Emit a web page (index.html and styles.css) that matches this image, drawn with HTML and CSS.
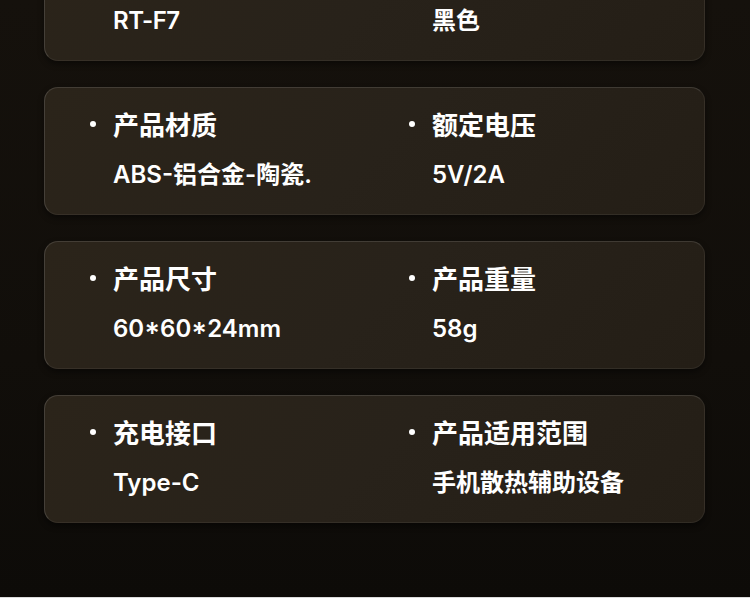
FILE: index.html
```html
<!DOCTYPE html>
<html lang="zh-CN">
<head>
<meta charset="utf-8">
<title>产品参数</title>
<link rel="stylesheet" href="styles.css">
</head>
<body>
<div class="page">
  <div class="specs">
    <div class="card card-partial">
      <div class="item"><div class="value value-narrow">RT-F7</div></div>
      <div class="item"><div class="value">黑色</div></div>
    </div>
    <div class="card">
      <div class="item"><div class="title"><span class="dot"></span>产品材质</div><div class="value">ABS-铝合金-陶瓷.</div></div>
      <div class="item"><div class="title"><span class="dot"></span>额定电压</div><div class="value">5V/2A</div></div>
    </div>
    <div class="card">
      <div class="item"><div class="title"><span class="dot"></span>产品尺寸</div><div class="value">60*60*24mm</div></div>
      <div class="item"><div class="title"><span class="dot"></span>产品重量</div><div class="value">58g</div></div>
    </div>
    <div class="card">
      <div class="item"><div class="title"><span class="dot"></span>充电接口</div><div class="value">Type-C</div></div>
      <div class="item"><div class="title"><span class="dot"></span>产品适用范围</div><div class="value">手机散热辅助设备</div></div>
    </div>
  </div>
</div>
</body>
</html>
```
FILE: styles.css
```css
html, body {
  margin: 0;
  padding: 0;
}
body {
  background: #110e0a;
  font-family: "Inter", "Noto Sans CJK SC", "Noto Sans", sans-serif;
  color: #ffffff;
}
.page {
  height: 597px;
  overflow: hidden;
  border-bottom: 1px solid #dcdcdc;
  background: linear-gradient(180deg, #15110c 0%, #110e0a 60%, #0d0b08 100%);
  padding: 0 45px 0 44px;
}
.specs {
  margin-top: -67px;
  display: flex;
  flex-direction: column;
  gap: 26px;
}
.card {
  height: 128px;
  box-sizing: border-box;
  border-radius: 14px;
  border: 1px solid rgba(255, 255, 255, 0.06);
  border-top-color: rgba(255, 255, 255, 0.12);
  border-left-color: rgba(255, 255, 255, 0.15);
  background: linear-gradient(135deg, #2b241a 0%, #28221a 50%, #241e16 100%);
  box-shadow: 0 3px 6px rgba(0, 0, 0, 0.45);
  display: grid;
  grid-template-columns: 319px 1fr;
  padding: 21px 0 0 45px;
}
.card-partial {
  padding-top: 72px;
}
.item {
  display: flex;
  flex-direction: column;
  gap: 21px;
}
.title {
  display: flex;
  align-items: center;
  gap: 17px;
  font-family: "Noto Sans CJK SC", sans-serif;
  font-size: 26px;
  line-height: 30px;
  font-weight: 700;
}
.dot {
  width: 6px;
  height: 6px;
  border-radius: 50%;
  background: #ffffff;
  flex: none;
}
.value {
  margin-left: 23px;
  font-size: 24px;
  line-height: 30px;
  font-weight: 600;
}
.value-narrow {
  letter-spacing: -0.5px;
}
```
